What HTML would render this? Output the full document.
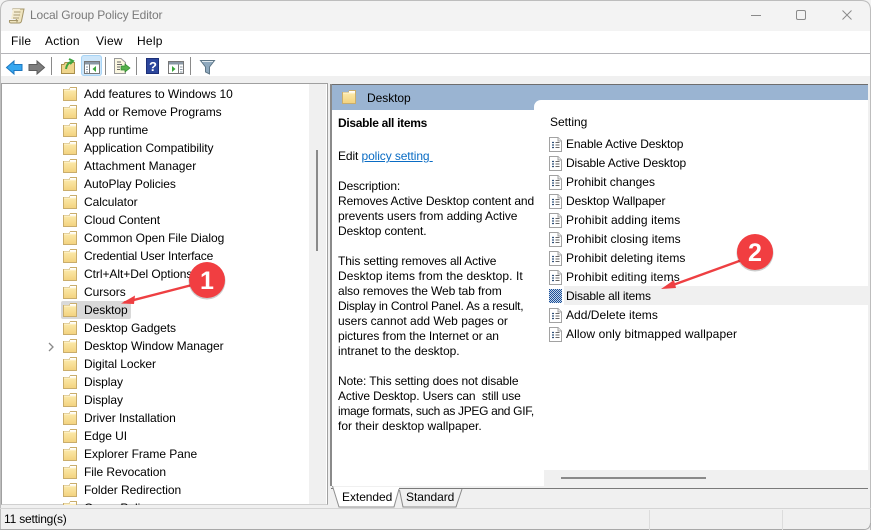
<!DOCTYPE html>
<html><head><meta charset="utf-8">
<style>
html,body{margin:0;padding:0;background:#fff}
#w{position:relative;width:871px;height:530px;overflow:hidden;background:#f0f0f0;font:12px/15px "Liberation Sans",sans-serif;color:#000}
#w div{position:absolute}
.t{white-space:nowrap;letter-spacing:.25px}
.tree{overflow:hidden;width:309px;height:505px;left:0;top:0}
.tree div{left:84px;white-space:nowrap;letter-spacing:-.05px;line-height:18px;height:18px}
.set div{left:566px;white-space:nowrap;letter-spacing:-.03px;line-height:19px;height:19px}
.desc div{left:338px;white-space:nowrap;letter-spacing:-.1px;line-height:15px;height:15px}
svg{position:absolute;left:0;top:0}
</style></head><body>
<div id="w">
<div style="left:0;top:0;width:871px;height:31px;background:#f3f3f3"></div>
<div style="left:0;top:31px;width:871px;height:22px;background:#fff"></div>
<div style="left:0;top:53px;width:871px;height:1px;background:#b4b4b8"></div>
<div style="left:0;top:54px;width:871px;height:22px;background:#fff"></div>
<div style="left:81px;top:55px;width:21px;height:21px;background:#cde6fa;border-radius:3px;box-shadow:inset 0 0 0 1px #a8d4f5"></div>

<div class="t" style="left:30px;top:8px;color:#7a7a7a;letter-spacing:-.12px">Local Group Policy Editor</div>
<div class="t" style="left:11px;top:34px">File</div>
<div class="t" style="left:45px;top:34px">Action</div>
<div class="t" style="left:96px;top:34px">View</div>
<div class="t" style="left:137px;top:34px">Help</div>

<!-- left panel -->
<div style="left:1px;top:83px;height:422px;background:#fff;border-top:1px solid #a0a0a0;border-right:1px solid #a0a0a0;border-left:1px solid #a0a0a0;border-bottom:1px solid #d0d0d0;box-sizing:border-box;width:327px"></div>
<div style="left:309px;top:84px;width:17px;height:420px;background:#f0f0f0"></div>
<div style="left:316px;top:150px;width:2px;height:101px;background:#8a8a8a"></div>
<div style="left:61px;top:301px;width:70px;height:18px;background:#d9d9d9;border-radius:2px"></div>

<div class="tree">
<div style="top:85px">Add features to Windows 10</div>
<div style="top:103px">Add or Remove Programs</div>
<div style="top:121px">App runtime</div>
<div style="top:139px">Application Compatibility</div>
<div style="top:157px;letter-spacing:.05px">Attachment Manager</div>
<div style="top:175px">AutoPlay Policies</div>
<div style="top:193px">Calculator</div>
<div style="top:211px">Cloud Content</div>
<div style="top:229px">Common Open File Dialog</div>
<div style="top:247px;letter-spacing:-.17px">Credential User Interface</div>
<div style="top:265px">Ctrl+Alt+Del Options</div>
<div style="top:283px">Cursors</div>
<div style="top:301px">Desktop</div>
<div style="top:319px">Desktop Gadgets</div>
<div style="top:337px">Desktop Window Manager</div>
<div style="top:355px">Digital Locker</div>
<div style="top:373px">Display</div>
<div style="top:391px">Display</div>
<div style="top:409px">Driver Installation</div>
<div style="top:427px">Edge UI</div>
<div style="top:445px">Explorer Frame Pane</div>
<div style="top:463px">File Revocation</div>
<div style="top:481px">Folder Redirection</div>
<div style="top:499px">Group Policy</div>
</div>

<!-- right panel -->
<div style="left:330px;top:84px;width:538px;height:402px;background:#fff"></div>
<div style="left:330px;top:84px;width:538px;height:1px;background:#6e6e6e"></div>
<div style="left:330px;top:84px;width:2px;height:402px;background:#8a8a8a"></div>
<div style="left:332px;top:85px;width:536px;height:25px;background:#9ab4d2"></div>
<div style="left:534px;top:100px;width:334px;height:12px;background:#fff;border-top-left-radius:7px"></div>
<div class="t" style="left:367px;top:91px;letter-spacing:-.05px">Desktop</div>
<div style="left:544px;top:470px;width:324px;height:16px;background:#f0f0f0"></div>
<div style="left:561px;top:477px;width:145px;height:2px;background:#8a8a8a"></div>
<div style="left:564px;top:286px;width:304px;height:19px;background:#f0f0f0"></div>

<div class="desc" style="left:0;top:0">
<div style="top:116px;font-weight:bold;letter-spacing:-.3px">Disable all items</div>
<div style="top:149px">Edit <span style="color:#0a6cc4;text-decoration:underline">policy setting&nbsp;</span></div>
<div style="top:179px">Description:</div>
<div style="top:194px">Removes Active Desktop content and</div>
<div style="top:209px;letter-spacing:-.04px">prevents users from adding Active</div>
<div style="top:224px">Desktop content.</div>
<div style="top:254px">This setting removes all Active</div>
<div style="top:269px;letter-spacing:.08px">Desktop items from the desktop. It</div>
<div style="top:284px">also removes the Web tab from</div>
<div style="top:299px;letter-spacing:-.23px">Display in Control Panel. As a result,</div>
<div style="top:314px;letter-spacing:0">users cannot add Web pages or</div>
<div style="top:329px">pictures from the Internet or an</div>
<div style="top:344px;letter-spacing:-.02px">intranet to the desktop.</div>
<div style="top:374px">Note: This setting does not disable</div>
<div style="top:389px;letter-spacing:-.13px">Active Desktop. Users can&nbsp; still use</div>
<div style="top:404px;letter-spacing:-.32px">image formats, such as JPEG and GIF,</div>
<div style="top:419px;letter-spacing:.01px">for their desktop wallpaper.</div>
</div>

<div class="t" style="left:550px;top:115px;letter-spacing:0">Setting</div>
<div class="set" style="left:0;top:0">
<div style="top:135px;letter-spacing:-.13px">Enable Active Desktop</div>
<div style="top:154px;letter-spacing:-.12px">Disable Active Desktop</div>
<div style="top:173px">Prohibit changes</div>
<div style="top:192px;letter-spacing:-.09px">Desktop Wallpaper</div>
<div style="top:211px;letter-spacing:.11px">Prohibit adding items</div>
<div style="top:230px;letter-spacing:.06px">Prohibit closing items</div>
<div style="top:249px;letter-spacing:.06px">Prohibit deleting items</div>
<div style="top:268px;letter-spacing:.11px">Prohibit editing items</div>
<div style="top:287px;letter-spacing:-.15px">Disable all items</div>
<div style="top:306px;letter-spacing:.03px">Add/Delete items</div>
<div style="top:325px;letter-spacing:.1px">Allow only bitmapped wallpaper</div>
</div>

<svg width="871" height="530" viewBox="0 0 871 530">
<defs>
<clipPath id="c"><rect x="0" y="0" width="871" height="505"/></clipPath>
<pattern id="dith" width="2" height="2" patternUnits="userSpaceOnUse"><rect width="2" height="2" fill="#c5d6e8"/><rect width="1" height="1" fill="#1d4f99"/><rect x="1" y="1" width="1" height="1" fill="#1d4f99"/></pattern>
<linearGradient id="fg" x1="0" y1="0" x2="0" y2="1"><stop offset="0" stop-color="#fdeeb4"/><stop offset="1" stop-color="#f3d27e"/></linearGradient>
<g id="f"><path d="M.5 2.500V13.500H13.500V.5H7.500L6.500 2.500Z" fill="url(#fg)" stroke="#c9ad6c"/><rect x="7" y="1" width="6" height="1.500" fill="#fff"/><path d="M1 3H13" stroke="#fff6d5" fill="none"/></g>
<g id="d"><path d="M.5 .5H9L12.500 4V14.500H.5Z" fill="#fff" stroke="#a2a2a2"/><path d="M9 .5V4H12.500" fill="#eee" stroke="#a2a2a2"/><path d="M3 5.500H5M3 8H5M3 10.500H5" stroke="#2f4f78" stroke-width="1.300"/><path d="M6.500 5.500H10.500M6.500 8H10.500M6.500 10.500H10.500" stroke="#666" stroke-width="1"/></g>
</defs>
<!-- window frame -->
<path d="M.5 530V10Q.5 .5 10 .5H861Q870.500 .5 870.500 10V530" fill="none" stroke="#bdbdbd"/>
<path d="M0 529.500H864Q870 529.500 870.500 523" fill="none" stroke="#a8a8a8"/>
<!-- title icon -->
<path d="M13 9H24L21.500 21Q21 23 19 23H11Q9 23 9.500 20.500H17.500L17 21.500L13 9Z" fill="#efe4bf" stroke="#a39468"/>
<path d="M13 9L11 19H18L20 9Z" fill="#f4ecd2"/>
<path d="M14 12H20.500M13.500 15H20M13 18H19" stroke="#a89a72"/>
<!-- caption buttons -->
<path d="M751 15.500H761" stroke="#8a8a8a"/>
<rect x="796.500" y="10.500" width="9" height="9" rx="1.500" fill="none" stroke="#8a8a8a"/>
<path d="M842.500 10.500L851.500 19.500M851.500 10.500L842.500 19.500" stroke="#8a8a8a" fill="none"/>
<!-- toolbar -->
<path d="M6.500 67.500L14 61V64.500H22V70.500H14V74Z" fill="#35a7f0" stroke="#1d77c0"/>
<path d="M44.500 67.500L37 61V64.500H29V70.500H37V74Z" fill="#7e7e7e" stroke="#5d5d5d"/>
<path d="M61.500 64.500H64L65 62.500H74.500V73.500H61.500Z" fill="#efd58c" stroke="#a98f4c"/>
<path d="M66 69Q67 63 71 62M69 59L73 61L70 64" fill="none" stroke="#3ea33e" stroke-width="2"/>
<rect x="84.500" y="61.500" width="15" height="12" fill="#fff" stroke="#777"/>
<rect x="85" y="62" width="14" height="2.500" fill="#8a98a6"/>
<path d="M89.500 64.500V73.500" stroke="#777"/><path d="M86 67H88M86 69.500H88M86 72H88" stroke="#8a98a6"/>
<path d="M96 66V72L92.500 69Z" fill="#3aa53a"/>
<path d="M114.500 58.500H121L125.500 62.500V73.500H114.500Z" fill="#fbf7e0" stroke="#999"/>
<path d="M117 62H121M117 64.500H122M117 67H120M117 69.500H120" stroke="#666"/>
<path d="M121 66H125V64L130 68L125 72V70H121Z" fill="#55b04b" stroke="#2c8a2c" stroke-width=".7"/>
<path d="M51.500 57V75M105.500 57V75M136.500 57V75M190.500 57V75" stroke="#8a8a8a"/>
<rect x="146.500" y="58.500" width="12" height="15" fill="#2c469c" stroke="#1c2f78"/>
<text x="149" y="71" font-family="Liberation Sans" font-weight="bold" font-size="13" fill="#fff">?</text>
<rect x="168.500" y="61.500" width="15" height="12" fill="#fff" stroke="#777"/>
<rect x="169" y="62" width="14" height="2.500" fill="#8a98a6"/>
<path d="M178.500 64.500V73.500" stroke="#777"/><path d="M180 67H182.500M180 69.500H182.500M180 72H182.500" stroke="#8a98a6"/>
<path d="M172 66V72L175.500 69Z" fill="#3aa53a"/>
<path d="M200.500 60.500H214.500L209.500 67V74L205.500 72V67Z" fill="#8fa9be" stroke="#5e7686"/>
<path d="M202 61.500H213" stroke="#dfe8ee" fill="none"/>

<!-- folders -->
<use href="#f" x="63" y="87"/><use href="#f" x="63" y="105"/><use href="#f" x="63" y="123"/><use href="#f" x="63" y="141"/><use href="#f" x="63" y="159"/><use href="#f" x="63" y="177"/><use href="#f" x="63" y="195"/><use href="#f" x="63" y="213"/><use href="#f" x="63" y="231"/><use href="#f" x="63" y="249"/><use href="#f" x="63" y="267"/><use href="#f" x="63" y="285"/><use href="#f" x="63" y="303"/><use href="#f" x="63" y="321"/><use href="#f" x="63" y="339"/><use href="#f" x="63" y="357"/><use href="#f" x="63" y="375"/><use href="#f" x="63" y="393"/><use href="#f" x="63" y="411"/><use href="#f" x="63" y="429"/><use href="#f" x="63" y="447"/><use href="#f" x="63" y="465"/><use href="#f" x="63" y="483"/>
<g clip-path="url(#c)"><use href="#f" x="63" y="501"/></g>
<path d="M49 343L53 347L49 351" fill="none" stroke="#8a8a8a" stroke-width="1.300"/>
<use href="#f" x="342" y="90"/>

<!-- setting icons -->
<use href="#d" x="549" y="137"/><use href="#d" x="549" y="156"/><use href="#d" x="549" y="175"/><use href="#d" x="549" y="194"/><use href="#d" x="549" y="213"/><use href="#d" x="549" y="232"/><use href="#d" x="549" y="251"/><use href="#d" x="549" y="270"/><use href="#d" x="549" y="308"/><use href="#d" x="549" y="327"/>
<rect x="549" y="289" width="13" height="14" fill="url(#dith)"/>

<!-- tabs -->
<path d="M331 488.500H868" stroke="#7a7a7a"/>
<path d="M333 487V488L339 507H393L399 489V487Z" fill="#fff"/>
<path d="M332.500 486L339 507H394L399 489" fill="none" stroke="#8f8f8f"/>
<path d="M399.500 490L403 507H456L462 489" fill="none" stroke="#8a8a8a"/>
<!-- status -->
<path d="M0 508.500H871" stroke="#d4d4d4"/>
<path d="M649.500 510V530M782.500 510V530" stroke="#dcdcdc"/>

<!-- annotation 1 -->
<path d="M192 285L124 302.500" stroke="#ee3f42" stroke-width="2.400"/>
<path d="M121 303.500L135 295.500L134 304Z" fill="#ee3f42"/>
<circle cx="207" cy="281" r="18.500" fill="#000" opacity=".2"/>
<circle cx="207" cy="280" r="18" fill="#f13e41"/>
<text x="207" y="289" text-anchor="middle" font-family="Liberation Sans" font-weight="bold" font-size="25" fill="#fff">1</text>
<!-- annotation 2 -->
<path d="M742 260L666 287.500" stroke="#ee3f42" stroke-width="2.400"/>
<path d="M661 289L674 280L676 288Z" fill="#ee3f42"/>
<circle cx="755" cy="253" r="18.500" fill="#000" opacity=".2"/>
<circle cx="755" cy="252" r="18" fill="#f13e41"/>
<text x="755" y="261" text-anchor="middle" font-family="Liberation Sans" font-weight="bold" font-size="25" fill="#fff">2</text>
</svg>

<!-- tab text / status -->
<div class="t" style="left:342px;top:490px;letter-spacing:-.05px">Extended</div>
<div class="t" style="left:406px;top:490px;letter-spacing:-.05px">Standard</div>
<div class="t" style="left:4px;top:512px;letter-spacing:-.2px">11 setting(s)</div>
</div>
</body></html>
